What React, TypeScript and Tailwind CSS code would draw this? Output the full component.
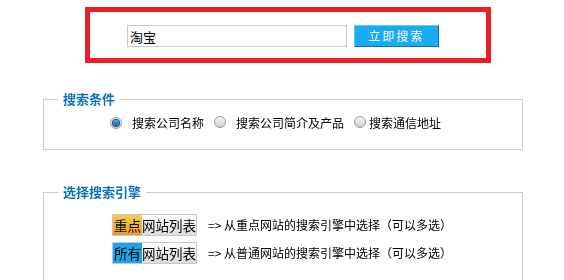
import React from 'react';

const FONT = "font-['Noto_Sans_CJK_SC','Noto_Sans',sans-serif]";

const Radio = ({ checked }: { checked?: boolean }) => (
  <span className="inline-flex w-[12px] h-[12px] shrink-0 items-center justify-center rounded-full border border-[#9a9a9a] bg-gradient-to-b from-[#f4f4f4] to-[#d2d2d2]">
    {checked && <span className="w-[6px] h-[6px] rounded-full bg-gradient-to-b from-[#4aa3e8] to-[#135fa8] shadow-[0_0_0_1px_#0d4f8c]" />}
  </span>
);

const ListButton = ({ tag, tone }: { tag: string; tone: 'orange' | 'blue' }) => (
  <div className="flex h-[22px] w-[85px] border border-[#c8c8c8] text-[13.5px] leading-[20px] text-black whitespace-nowrap overflow-hidden">
    <span
      className={
        tone === 'orange'
          ? 'w-[29px] shrink-0 bg-gradient-to-b from-[#f6cf4a] to-[#e8982e] text-center'
          : 'w-[29px] shrink-0 bg-[#1aa4ec] text-center'
      }
    >
      {tag}
    </span>
    <span className="flex-1 bg-gradient-to-b from-[#ffffff] to-[#dcdcdc] text-left">网站列表</span>
  </div>
);

export default function App() {
  return (
    <div className={`w-[564px] h-[280px] overflow-hidden bg-white ${FONT} text-[12px] text-black`}>
      {/* top search */}
      <div className="ml-[85px] mt-[7px] w-[406px] h-[56px] border-[5px] border-[#ee1c25] flex items-center pl-[37px] pt-[2px]">
        <input
          defaultValue="淘宝"
          autoFocus
          className="w-[220px] h-[22px] border border-[#cccccc] px-[2px] text-[13px] outline-none text-black"
        />
        <button className="ml-[7px] w-[85px] h-[22px] bg-[#19acf3] border border-t-[#5ccaf8] border-l-[#5ccaf8] border-r-[#0a78b8] border-b-[#0a78b8] text-white text-[12px] tracking-[2px] leading-[20px]">
          立即搜索
        </button>
      </div>

      {/* search condition */}
      <fieldset className="ml-[43px] mt-[28px] w-[480px] border border-[#cccccc] p-0 m-0">
        <legend className="ml-[14px] px-[5px] text-[13px] leading-[16px] font-bold text-[#0b72b6]">搜索条件</legend>
        <div className="flex items-center h-[16px] mt-[8px] mb-[18px] pl-[66px]">
          <Radio checked />
          <span className="ml-[10px]">搜索公司名称</span>
          <span className="ml-[10px]"><Radio /></span>
          <span className="ml-[10px]">搜索公司简介及产品</span>
          <span className="ml-[10px]"><Radio /></span>
          <span className="ml-[3px]">搜索通信地址</span>
        </div>
      </fieldset>

      {/* engines */}
      <fieldset className="ml-[43px] mt-[34px] w-[480px] border border-[#cccccc] p-0 m-0">
        <legend className="ml-[14px] px-[5px] text-[13px] leading-[16px] font-bold text-[#0b72b6]">选择搜索引擎</legend>
        <div className="flex flex-col gap-[6px] pt-[14px] pb-[20px] pl-[68px]">
          <div className="flex items-center">
            <ListButton tag="重点" tone="orange" />
            <span className="ml-[11px]">=&gt; 从重点网站的搜索引擎中选择（可以多选）</span>
          </div>
          <div className="flex items-center">
            <ListButton tag="所有" tone="blue" />
            <span className="ml-[11px]">=&gt; 从普通网站的搜索引擎中选择（可以多选）</span>
          </div>
        </div>
      </fieldset>
    </div>
  );
}
